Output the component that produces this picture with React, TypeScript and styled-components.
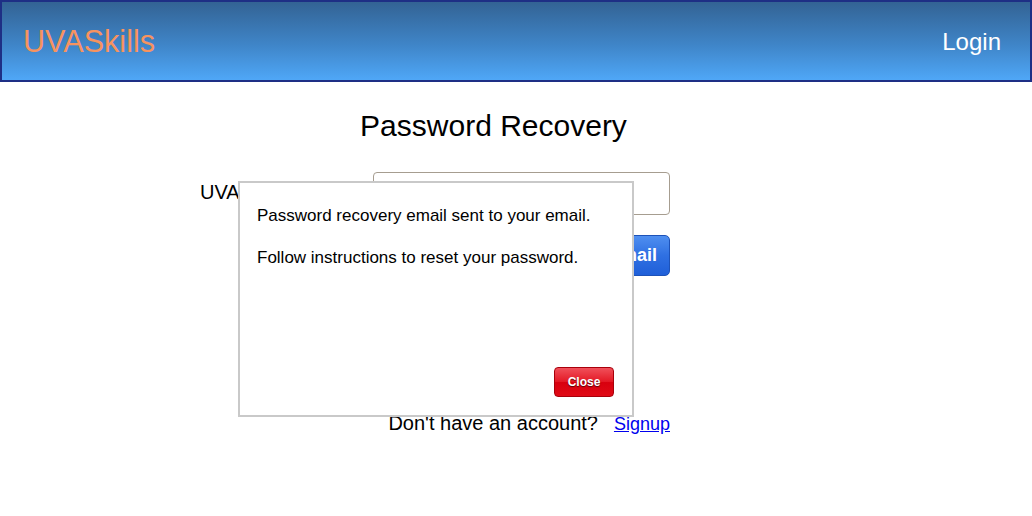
import React from "react";
import styled, { createGlobalStyle } from "styled-components";

const Global = createGlobalStyle`
  html, body { margin: 0; padding: 0; background: #fff; }
  body { font-family: "Liberation Sans", Arial, sans-serif; color: #000; }
`;

const Page = styled.div`
  position: relative;
  width: 1032px;
  height: 516px;
  overflow: hidden;
`;

const Header = styled.header`
  box-sizing: border-box;
  height: 82px;
  border: 2px solid #1e2f85;
  background: linear-gradient(to bottom, #336394 0%, #3f85c8 55%, #4fa7f7 100%);
  display: flex;
  align-items: center;
  justify-content: space-between;
  padding: 0 29px 0 21px;
`;

const Logo = styled.div`
  font-size: 30.6px;
  color: #f7935f;
  margin-top: 1px;
`;

const NavLink = styled.div`
  font-size: 24px;
  color: #ffffff;
  margin-top: 2px;
`;

const Title = styled.h1`
  margin: 26px 0 0;
  width: 987px;
  text-align: center;
  font-size: 30px;
  font-weight: normal;
  line-height: 36px;
`;

const Form = styled.div`
  width: 470px;
  margin: 28px 0 0 200px;
  display: flex;
  flex-direction: column;
`;

const Row = styled.div`
  display: flex;
  align-items: center;
`;

const Label = styled.label`
  width: 173px;
  font-size: 20px;
  margin-top: -2px;
`;

const Input = styled.div`
  box-sizing: border-box;
  width: 297px;
  height: 43px;
  border: 1px solid #a69d90;
  border-radius: 4px;
  background: #fff;
`;

const Actions = styled.div`
  display: flex;
  justify-content: flex-end;
  margin-top: 20px;
`;

const BlueButton = styled.button`
  box-sizing: border-box;
  height: 41px;
  padding: 0 12px;
  border: 1px solid #1d52b8;
  border-radius: 5px;
  background: linear-gradient(to bottom, #4f8ff0 0%, #2f70e2 50%, #1f5fd8 100%);
  color: #fff;
  font-family: "Liberation Sans", Arial, sans-serif;
  font-weight: bold;
  font-size: 18px;
`;

const Footer = styled.div`
  display: flex;
  justify-content: flex-end;
  align-items: baseline;
  gap: 16px;
  margin-top: 136px;
`;

const Prompt = styled.span`
  font-size: 20px;
`;

const Link = styled.a`
  font-size: 18px;
  color: #0000ee;
  text-decoration: underline;
`;

const Modal = styled.div`
  position: absolute;
  left: 238px;
  top: 181px;
  box-sizing: border-box;
  width: 396px;
  height: 236px;
  border: 2px solid #c9c9c9;
  background: #fff;
  padding: 23px 18px 18px 17px;
  display: flex;
  flex-direction: column;
`;

const Message = styled.p`
  margin: 0 0 22px;
  font-size: 17px;
  line-height: 20px;
`;

const ModalActions = styled.div`
  margin-top: auto;
  display: flex;
  justify-content: flex-end;
`;

const CloseButton = styled.button`
  box-sizing: border-box;
  width: 60px;
  height: 30px;
  border: 1px solid #a8000a;
  border-radius: 4px;
  background: linear-gradient(to bottom, #f0505a 0%, #e41a26 48%, #d8000e 52%, #e00a16 100%);
  color: #fff;
  font-family: "Liberation Sans", Arial, sans-serif;
  font-weight: bold;
  font-size: 12px;
  text-shadow: 0 1px 1px rgba(0, 0, 0, 0.6);
  padding: 0;
`;

export default function App() {
  return (
    <Page>
      <Global />
      <Header>
        <Logo>UVASkills</Logo>
        <NavLink>Login</NavLink>
      </Header>
      <Title>Password Recovery</Title>
      <Form>
        <Row>
          <Label>UVA Email:</Label>
          <Input />
        </Row>
        <Actions>
          <BlueButton>Send Email</BlueButton>
        </Actions>
        <Footer>
          <Prompt>Don't have an account?</Prompt>
          <Link href="#">Signup</Link>
        </Footer>
      </Form>
      <Modal>
        <Message>Password recovery email sent to your email.</Message>
        <Message>Follow instructions to reset your password.</Message>
        <ModalActions>
          <CloseButton>Close</CloseButton>
        </ModalActions>
      </Modal>
    </Page>
  );
}
